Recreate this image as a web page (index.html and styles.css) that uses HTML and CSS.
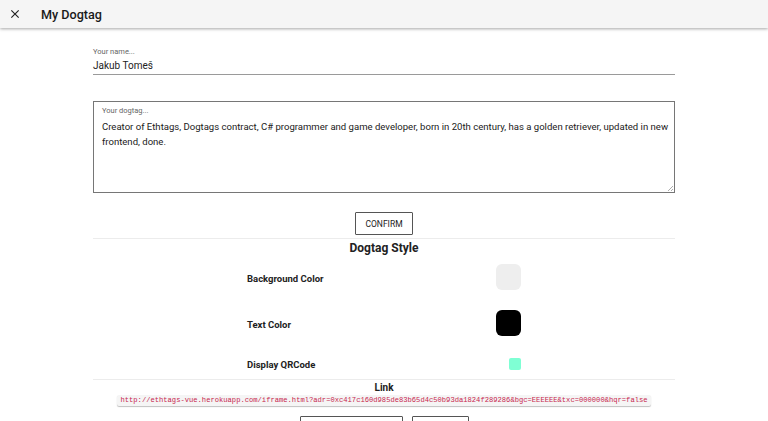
FILE: index.html
```html
<!DOCTYPE html>
<html>
<head>
<meta charset="utf-8">
<link rel="stylesheet" href="styles.css">
</head>
<body>
<header class="toolbar">
  <svg class="close" viewBox="0 0 24 24" width="14" height="14"><path d="M19 6.41 17.59 5 12 10.59 6.41 5 5 6.41 10.59 12 5 17.59 6.41 19 12 13.41 17.59 19 19 17.59 13.41 12z" fill="#222"/></svg>
  <span class="title">My Dogtag</span>
</header>
<main class="content">
  <div class="field">
    <div class="label">Your name...</div>
    <div class="value">Jakub Tomeš</div>
  </div>
  <div class="area">
    <div class="label">Your dogtag...</div>
    <div class="area-text">Creator of Ethtags, Dogtags contract, C# programmer and game developer, born in 20th century, has a golden retriever, updated in new frontend, done.</div>
    <svg class="grip" viewBox="0 0 6 6" width="6" height="6"><path d="M6 1 1 6M6 4 4 6" stroke="#999" stroke-width="0.8"/></svg>
  </div>
  <div class="confirm-row"><button class="btn">CONFIRM</button></div>
  <hr class="divider">
  <h2 class="heading">Dogtag Style</h2>
  <div class="rows">
    <div class="row tall"><span>Background Color</span><span class="swatch bg"></span></div>
    <div class="row tall"><span>Text Color</span><span class="swatch fg"></span></div>
    <div class="row short"><span>Display QRCode</span><span class="check"></span></div>
  </div>
  <hr class="divider">
  <h3 class="link-title">Link</h3>
  <div class="link-row"><code class="link">http://ethtags-vue.herokuapp.com/iframe.html?adr=0xc417c160d985de83b65d4c50b93da1824f289286&amp;bgc=EEEEEE&amp;txc=000000&amp;hqr=false</code></div>
  <div class="bottom-btns"><button class="btn wide"></button><button class="btn narrow"></button></div>
</main>
</body>
</html>
```
FILE: styles.css
```css
html, body { margin: 0; padding: 0; background: #fff; overflow: hidden; }
body { font-family: Roboto, "Liberation Sans", sans-serif; color: #222; height: 421px; }
.toolbar {
  height: 28px; background: #f5f5f5; display: flex; align-items: center;
  box-shadow: 0 1px 3px rgba(0,0,0,0.35); position: relative; z-index: 1;
}
.close { margin-left: 8px; }
.title { margin-left: 19px; font-size: 12.6px; font-weight: 500; color: #1a1a1a; }
.content { width: 582px; margin: 0 auto; padding-top: 19px; }
.field { border-bottom: 1px solid #9a9a9a; padding-bottom: 2px; }
.label { font-size: 7.5px; color: #666; line-height: 9px; }
.value { font-size: 10px; line-height: 13px; margin-top: 3px; color: #222; }
.area {
  margin-top: 26px; height: 92px; box-sizing: border-box; border: 1px solid #767676; position: relative;
  padding: 4px 0 0 8px;
}
.area-text { font-size: 9.55px; line-height: 15px; margin-top: 4px; color: #1a1a1a; }
.grip { position: absolute; right: 1px; bottom: 1px; }
.confirm-row { display: flex; justify-content: center; margin-top: 19px; }
.btn {
  background: #fff; border: 1px solid #555; border-radius: 1px; font-family: Roboto, sans-serif;
  font-size: 8.5px; font-weight: 400; color: #222; padding: 0; height: 23px; width: 58px;
}
.divider { border: 0; border-top: 1px solid #ececec; margin: 3px 0 0 0; }
.heading { margin: 2px 0 0 0; text-align: center; font-size: 12px; font-weight: 700; line-height: 15px; }
.rows { width: 274px; margin: 0 auto; padding-top: 8px; }
.row { display: flex; justify-content: space-between; align-items: center; font-size: 9.5px; font-weight: 700; }
.row span:first-child { padding-top: 3px; }
.row.tall { height: 26px; margin-bottom: 20px; }
.row.short { height: 12px; margin-top: 22px; }
.row.short span:first-child { padding-top: 0; }
.swatch { width: 25px; height: 26px; border-radius: 6px; }
.swatch.bg { background: #eeeeee; }
.swatch.fg { background: #000; }
.check { width: 12px; height: 12px; border-radius: 2px; background: #7fffd4; }
.rows + .divider { margin-top: 9px; }
.link-title { margin: 2px 0 0 0; text-align: center; font-size: 10px; font-weight: 700; line-height: 12px; }
.link-row { display: flex; justify-content: center; margin-top: 1px; }
.link {
  font-family: "Liberation Mono", monospace; font-size: 7.15px; color: #c7254e; background: #f5f5f5;
  padding: 1px 3px; line-height: 9px; border-radius: 2px; box-shadow: 0 1px 1px rgba(0,0,0,0.25);
}
.bottom-btns { display: flex; justify-content: center; gap: 9px; margin-top: 10px; }
.btn.wide { width: 103px; }
.btn.narrow { width: 57px; }
```
